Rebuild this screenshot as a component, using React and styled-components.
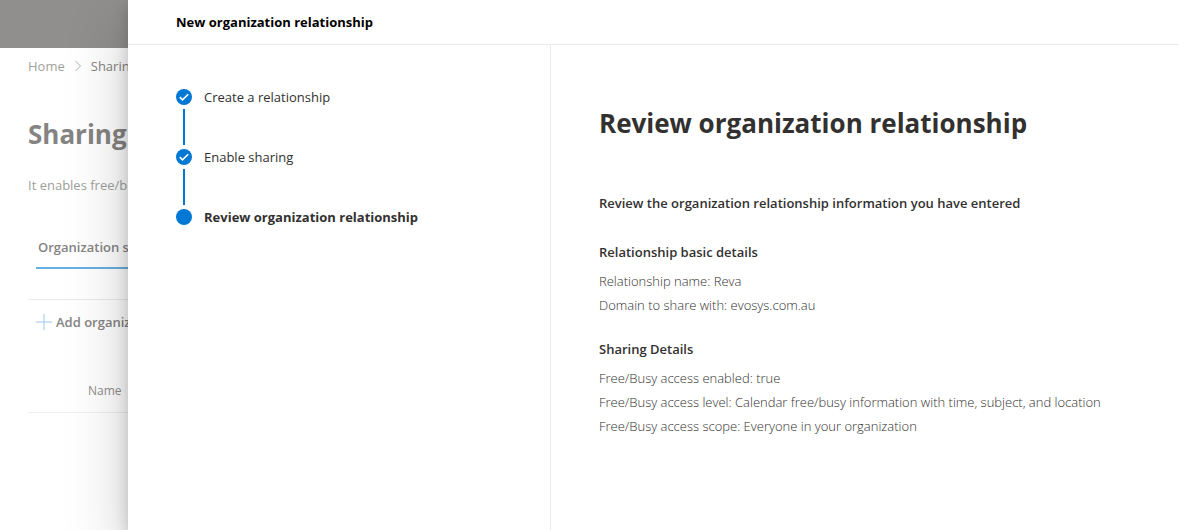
import styled, { createGlobalStyle } from "styled-components"

const steps = [
    { label: "Create a relationship", done: true },
    { label: "Enable sharing", done: true },
    { label: "Review organization relationship", done: false },
]

const sections = [
    {
        title: "Relationship basic details",
        lines: ["Relationship name: Reva", "Domain to share with: evosys.com.au"],
    },
    {
        title: "Sharing Details",
        lines: [
            "Free/Busy access enabled: true",
            "Free/Busy access level: Calendar free/busy information with time, subject, and location",
            "Free/Busy access scope: Everyone in your organization",
        ],
    },
]

export default function App() {
    return (
        <>
            <GlobalStyle />
            <Screen>
                <TopBar />
                <Page>
                    <Breadcrumb aria-label="Breadcrumb">
                        <CrumbLink href="#home">Home</CrumbLink>
                        <Chevron viewBox="0 0 8 12" aria-hidden="true">
                            <path d="M1.5 1 6.5 6 1.5 11" />
                        </Chevron>
                        <CurrentCrumb>Sharing</CurrentCrumb>
                    </Breadcrumb>
                    <PageTitle>Sharing</PageTitle>
                    <Intro>It enables free/busy</Intro>
                    <Tab type="button">Organization sharing</Tab>
                    <CommandBar>
                        <AddButton type="button">
                            <PlusIcon viewBox="0 0 16 16" aria-hidden="true">
                                <path d="M8 0V16M0 8H16" />
                            </PlusIcon>
                            Add organization
                        </AddButton>
                    </CommandBar>
                    <Table>
                        <thead>
                            <tr>
                                <HeadCell scope="col">Name</HeadCell>
                            </tr>
                        </thead>
                    </Table>
                </Page>

                {/* Panel that slides over the page */}
                <Panel role="dialog" aria-labelledby="panel-title">
                    <PanelHeader>
                        <PanelTitle id="panel-title">New organization relationship</PanelTitle>
                    </PanelHeader>
                    <PanelBody>
                        <Steps>
                            {steps.map((step) => (
                                <Step key={step.label} $current={!step.done}>
                                    <Dot viewBox="0 0 16 16" aria-hidden="true">
                                        <circle cx="8" cy="8" r="8" />
                                        {step.done && <path d="M3.8 8.2 6.5 10.8 12.2 5.2" />}
                                    </Dot>
                                    {step.label}
                                </Step>
                            ))}
                        </Steps>
                        <Review>
                            <ReviewTitle>Review organization relationship</ReviewTitle>
                            <Lead>Review the organization relationship information you have entered</Lead>
                            {sections.map((section) => (
                                <Section key={section.title}>
                                    <SectionTitle>{section.title}</SectionTitle>
                                    {section.lines.map((line) => (
                                        <Line key={line}>{line}</Line>
                                    ))}
                                </Section>
                            ))}
                        </Review>
                    </PanelBody>
                </Panel>
            </Screen>
        </>
    )
}


const GlobalStyle = createGlobalStyle`
  * {
    box-sizing: border-box;
  }

  body {
    margin: 0;
    background-color: #fff;
    color: #323130;
    font-family: "Segoe UI", "Open Sans", "Noto Sans", sans-serif;
    font-size: 13px;
    line-height: 20px;
  }

  h1, h2, h3, p, ol {
    margin: 0;
    padding: 0;
  }

  button {
    border: none;
    background: none;
    font: inherit;
  }
`;

const Screen = styled.div`
  position: relative;
  min-height: 100vh;
  overflow: hidden;
`;

const TopBar = styled.header`
  height: 48px;
  background-color: #918f8e;
`;

const Page = styled.main`
  padding: 8px 0 0 28px;
  color: #858483;
  white-space: nowrap;
`;

const Breadcrumb = styled.nav`
  display: flex;
  align-items: center;
  gap: 9px;
`;

const CrumbLink = styled.a`
  color: #a19f9d;
  text-decoration: none;
`;

const CurrentCrumb = styled.span`
  color: #858483;
`;

const Chevron = styled.svg`
  width: 8px;
  height: 12px;
  fill: none;
  stroke: #b3b1af;
`;

const PageTitle = styled.h1`
  margin-top: 40px;
  font-size: 26px;
  font-weight: 700;
  line-height: 36px;
`;

const Intro = styled.p`
  margin-top: 23px;
  color: #a19f9d;
`;

const Tab = styled.button`
  display: block;
  height: 42px;
  margin: 32px 0 0 8px;
  padding: 0 2px;
  border-bottom: 2px solid #67b0e3;
  color: #858483;
  font-weight: 600;
`;

const CommandBar = styled.div`
  margin-top: 30px;
  padding: 12px 8px;
  border-top: 1px solid #eaeaea;
`;

const AddButton = styled.button`
  display: flex;
  align-items: center;
  gap: 4px;
  padding: 0;
  color: #858483;
  font-weight: 600;
`;

const PlusIcon = styled.svg`
  width: 16px;
  height: 16px;
  stroke: #9cc8e8;
`;

const Table = styled.table`
  width: 100%;
  margin-top: 27px;
  border-collapse: collapse;
`;

const HeadCell = styled.th`
  height: 41px;
  padding: 0 0 0 60px;
  border-bottom: 1px solid #efefef;
  color: #918f8e;
  font-size: 12px;
  font-weight: 400;
  text-align: left;
`;

const Panel = styled.section`
  position: absolute;
  inset: 0 0 0 128px;
  display: flex;
  flex-direction: column;
  background-color: #fff;
  box-shadow: 0 26px 58px rgba(0, 0, 0, 0.22), 0 5px 14px rgba(0, 0, 0, 0.18);
`;

const PanelHeader = styled.div`
  padding: 12px 48px;
  border-bottom: 1px solid #eaeaea;
`;

const PanelTitle = styled.h2`
  color: #000;
  font-size: 13px;
  font-weight: 700;
  line-height: 20px;
`;

const PanelBody = styled.div`
  display: flex;
  flex: 1;
`;

const Steps = styled.ol`
  flex: 0 0 423px;
  border-right: 1px solid #eaeaea;
  && {
    padding: 42px 48px;
  }
  list-style: none;
`;

const Step = styled.li`
  position: relative;
  display: flex;
  align-items: center;
  gap: 12px;
  font-weight: ${(props) => props.$current ? '700' : '400'};

  &:not(:first-child) {
    margin-top: 40px;
  }

  /* line up to the step before */
  &:not(:first-child)::before {
    content: "";
    position: absolute;
    bottom: 22px;
    left: 7px;
    width: 2px;
    height: 36px;
    background-color: #0078d4;
  }
`;

const Dot = styled.svg`
  width: 16px;
  height: 16px;
  fill: #0078d4;

  path {
    fill: none;
    stroke: #fff;
    stroke-width: 1.6;
  }
`;

const Review = styled.div`
  flex: 1;
  padding: 60px 48px;
`;

const ReviewTitle = styled.h1`
  font-size: 26px;
  font-weight: 700;
  line-height: 36px;
`;

const Lead = styled.p`
  margin-top: 52px;
  padding-bottom: 7px;
  font-weight: 600;
`;

const Section = styled.section`
  margin-top: 22px;
`;

const SectionTitle = styled.h3`
  margin-bottom: 7px;
  font-size: 13px;
  font-weight: 600;
  line-height: 20px;
`;

const Line = styled.p`
  font-weight: 300;
  line-height: 24px;
`;
